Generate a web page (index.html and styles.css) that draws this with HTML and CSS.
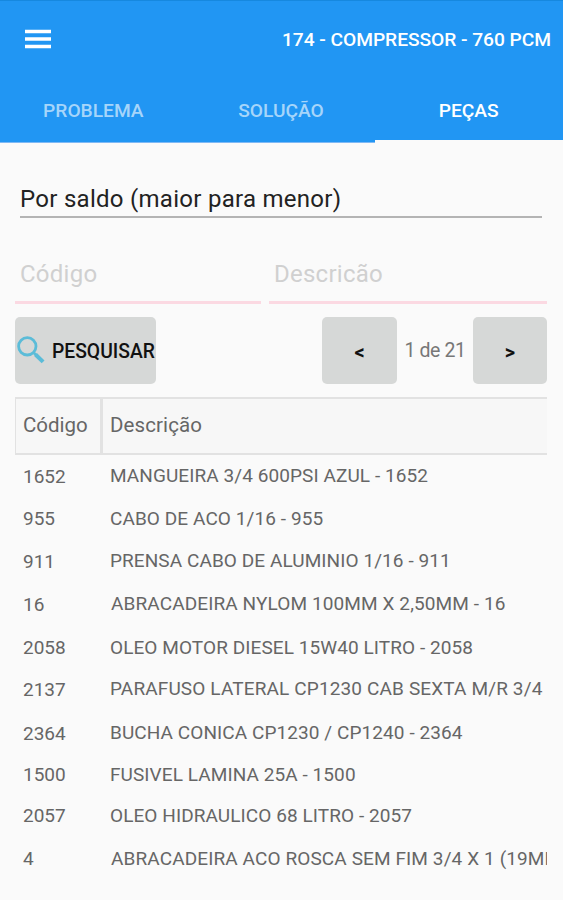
FILE: index.html
```html
<!DOCTYPE html>
<html lang="pt-BR">
<head>
<meta charset="utf-8">
<title>Peças</title>
<link rel="stylesheet" href="styles.css">
</head>
<body>
<header class="appbar">
  <div class="toolbar">
    <svg class="menu" width="28" height="20" viewBox="0 0 28 20"><path d="M1 2.6h26M1 10h26M1 17.4h26" stroke="#fff" stroke-width="3.5"/></svg>
    <h1 class="title">174 - COMPRESSOR - 760 PCM</h1>
  </div>
  <nav class="tabs">
    <a class="tab"><span>PROBLEMA</span></a>
    <a class="tab"><span>SOLUÇÃO</span></a>
    <a class="tab active"><span>PEÇAS</span></a>
  </nav>
</header>
<main class="content">
  <div class="sort"><span>Por saldo (maior para menor)</span></div>
  <div class="filters">
    <div class="field"><span>Código</span></div>
    <div class="field"><span>Descricão</span></div>
  </div>
  <div class="actions">
    <button class="btn search"><svg width="29" height="29" viewBox="0 0 29 29" fill="none" stroke="#5bbcd8"><circle cx="10.3" cy="10.3" r="8.7" stroke-width="2.8"/><path d="M16.5 16.5l2.5 2.5" stroke-width="2.6"/><path d="M18.5 18.5l7.6 7.4" stroke-width="4"/></svg><span>PESQUISAR</span></button>
    <div class="pager">
      <button class="btn nav">&lt;</button>
      <span class="page">1 de 21</span>
      <button class="btn nav">&gt;</button>
    </div>
  </div>
  <div class="thead"><div class="th">Código</div><div class="th">Descrição</div></div>
  <div class="rows">
    <div class="row low"><span>1652</span><span class="desc">MANGUEIRA 3/4 600PSI AZUL - 1652</span></div>
    <div class="row"><span>955</span><span class="desc">CABO DE ACO 1/16 - 955</span></div>
    <div class="row low"><span>911</span><span class="desc">PRENSA CABO DE ALUMINIO 1/16 - 911</span></div>
    <div class="row low"><span>16</span><span class="desc inset">ABRACADEIRA NYLOM 100MM X 2,50MM - 16</span></div>
    <div class="row"><span>2058</span><span class="desc">OLEO MOTOR DIESEL 15W40 LITRO - 2058</span></div>
    <div class="row low"><span>2137</span><span class="desc wide">PARAFUSO LATERAL CP1230 CAB SEXTA M/R 3/4</span></div>
    <div class="row low"><span>2364</span><span class="desc">BUCHA CONICA CP1230 / CP1240 - 2364</span></div>
    <div class="row"><span>1500</span><span class="desc">FUSIVEL LAMINA 25A - 1500</span></div>
    <div class="row"><span>2057</span><span class="desc">OLEO HIDRAULICO 68 LITRO - 2057</span></div>
    <div class="row"><span>4</span><span class="desc inset">ABRACADEIRA ACO ROSCA SEM FIM 3/4 X 1 (19MM)</span></div>
  </div>
</main>
</body>
</html>
```
FILE: styles.css
```css
* { box-sizing: border-box; }
body { margin: 0; height: 900px; overflow: hidden; background: #fafafa; font-family: Roboto, sans-serif; color: #666; }
.appbar { height: 143px; background: #2196f3; border-top: 1px solid #1688df; display: flex; flex-direction: column; }
.toolbar { height: 79px; display: flex; align-items: center; justify-content: space-between; padding: 0 12px 3px 24px; }
.menu { display: block; }
.title { margin: 0; font-size: 19.2px; letter-spacing: -0.04px; font-weight: 500; color: #fff; white-space: nowrap; }
.tabs { flex: 1; display: grid; grid-template-columns: repeat(3, 1fr); }
.tab { display: flex; justify-content: center; padding-top: 19px; padding-right: 1px; font-size: 19.2px; line-height: 24px; font-weight: 500; color: #a6d5fa; border-bottom: 1px solid #7fb9f5; }
.tab.active { color: #fff; border-bottom: 3px solid #fafafa; }
.content { padding: 32px 16px 0 15px; }
.sort { height: 43px; margin: 0 5px; border-bottom: 2px solid #b4b4b4; color: #222; font-size: 24px; letter-spacing: .28px; line-height: 48px; }
.filters { display: grid; grid-template-columns: 246px 1fr; gap: 8px; margin-top: 27px; }
.field { height: 59px; padding-left: 5px; border-bottom: 3px solid #fbd9e2; color: #d0d0d0; font-size: 24px; letter-spacing: .25px; line-height: 58px; }
.actions { display: flex; justify-content: space-between; margin-top: 13px; }
.btn { border: 0; border-radius: 5px; background: #d6d8d7; height: 67px; padding: 0; font-family: inherit; font-weight: 500; color: #111; font-size: 19.3px; }
.search { width: 141px; display: flex; align-items: center; gap: 6px; padding-left: 2px; white-space: nowrap; }
.search svg { flex: none; margin-bottom: 1px; }
.search span { padding-top: 1px; }
.pager { display: flex; align-items: center; }
.nav { width: 74px; font-weight: 700; font-size: 20px; padding-top: 3px; }
.nav:first-child { width: 75px; }
.page { width: 76px; text-align: center; font-size: 19.5px; letter-spacing: -.4px; color: #777; }
.thead { display: grid; grid-template-columns: 84px 1fr; height: 58px; margin-top: 13px; border: 2px solid #e2e2e2; border-left-width: 1px; border-right: 0; background: #f7f7f7; }
.th { font-size: 20.5px; line-height: 53px; padding-left: 7px; }
.th + .th { border-left: 3px solid #e2e2e2; letter-spacing: .1px; }
.rows { display: grid; grid-template-rows: 43px 42px 43px 44px 41px 44px 42px 41px 43px 42px; }
.row { display: grid; grid-template-columns: 87px 1fr; padding-left: 8px; font-size: 19px; line-height: 42px; }
.row.low > span:first-child { padding-top: 1px; }
.desc { overflow: hidden; white-space: nowrap; letter-spacing: .08px; }
.desc.inset { padding-left: 1px; letter-spacing: .11px; }
.desc.wide { letter-spacing: .14px; }
```
